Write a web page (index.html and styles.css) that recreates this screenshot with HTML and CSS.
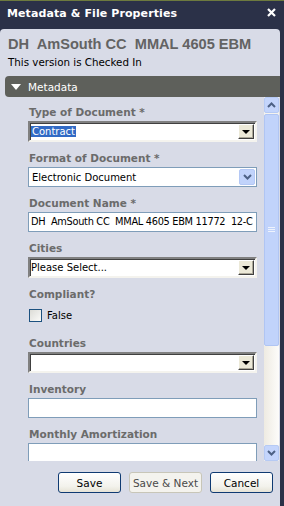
FILE: index.html
```html
<html>
  <head>
    <title>Metadata &amp; File Properties</title>
    <link rel="stylesheet" href="styles.css">
  </head>
  <body>
    <div id="dialog">
      <div class="titlebar">
        <span class="title">Metadata &amp; File Properties</span>
        <svg class="close" width="9" height="9" viewBox="0 0 9 9">
          <path d="M1 1 L8 8 M8 1 L1 8" stroke="white" stroke-width="2.2" />
        </svg>
      </div>

      <div class="panel">
        <div class="doc-title">DH  AmSouth CC  MMAL 4605 EBM</div>
        <div class="status">This version is Checked In</div>

        <div class="section-bar">
          <span class="tri"></span>
          <span>Metadata</span>
        </div>

        <div class="scroll-area">
          <div class="form">
            <div class="field">
              <label>Type of Document *</label>
              <div class="select classic">
                <span class="value"><span class="picked">Contract</span></span>
                <span class="drop-btn"><span class="tri-dark"></span></span>
              </div>
            </div>

            <div class="field">
              <label>Format of Document *</label>
              <div class="select xp">
                <span class="value">Electronic Document</span>
                <span class="drop-btn">
                  <svg width="9" height="6" viewBox="0 0 9 6"><path d="M1 1 L4.5 4.5 L8 1" fill="none" stroke="#4d6185" stroke-width="2" /></svg>
                </span>
              </div>
            </div>

            <div class="field">
              <label>Document Name *</label>
              <div class="text-input name">DH  AmSouth CC  MMAL 4605 EBM 11772  12-C</div>
            </div>

            <div class="field">
              <label>Cities</label>
              <div class="select classic">
                <span class="value">Please Select...</span>
                <span class="drop-btn"><span class="tri-dark"></span></span>
              </div>
            </div>

            <div class="field">
              <label>Compliant?</label>
              <div class="check-row">
                <span class="checkbox"></span>
                <span>False</span>
              </div>
            </div>

            <div class="field">
              <label>Countries</label>
              <div class="select classic">
                <span class="value"></span>
                <span class="drop-btn"><span class="tri-dark"></span></span>
              </div>
            </div>

            <div class="field">
              <label>Inventory</label>
              <div class="text-input"></div>
            </div>

            <div class="field">
              <label>Monthly Amortization</label>
              <div class="text-input"></div>
            </div>
          </div>

          <div class="scrollbar">
            <div class="sb-btn">
              <svg width="9" height="6" viewBox="0 0 9 6"><path d="M1 5 L4.5 1.5 L8 5" fill="none" stroke="#4d6185" stroke-width="2" /></svg>
            </div>
            <div class="sb-thumb">
              <svg width="7" height="6" viewBox="0 0 7 6"><path d="M0 0.5 H7 M0 2.5 H7 M0 4.5 H7" stroke="#eef3fd" stroke-width="1" /></svg>
            </div>
            <div class="sb-track"></div>
            <div class="sb-btn">
              <svg width="9" height="6" viewBox="0 0 9 6"><path d="M1 1 L4.5 4.5 L8 1" fill="none" stroke="#4d6185" stroke-width="2" /></svg>
            </div>
          </div>
        </div>

        <div class="actions">
          <button class="btn save">Save</button>
          <button class="btn disabled">Save &amp; Next</button>
          <button class="btn cancel">Cancel</button>
        </div>
      </div>
    </div>
  </body>
</html>
```

FILE: styles.css
```css
* {
  box-sizing: border-box;
  margin: 0;
  padding: 0;
}
body {
  background: #2b3148;
  font-family: "DejaVu Sans", Verdana, sans-serif;
  font-size: 10px;
  overflow: hidden;
}
#dialog {
  display: flex;
  flex-direction: column;
  height: 506px;
  width: 284px;
  border-top: 1px solid #6d7a3f;
}
.titlebar {
  display: flex;
  justify-content: space-between;
  align-items: center;
  height: 28px;
  padding: 0 8px 4px 7px;
}
.title {
  color: white;
  font-weight: bold;
  font-size: 11px;
  letter-spacing: 0.1px;
}
.close {
  margin-top: -2px;
}
.panel {
  flex-grow: 1;
  display: flex;
  flex-direction: column;
  background: #d8dbe7;
  margin-right: 4px;
  border-radius: 4px 4px 0 0;
}
.doc-title {
  white-space: pre;
  font-family: "Liberation Sans", Arial, sans-serif;
  font-weight: bold;
  font-size: 14.6px;
  color: #636363;
  padding: 7px 0 0 8px;
  height: 24px;
}
.status {
  color: black;
  font-size: 10.3px;
  padding: 3px 0 0 8px;
  height: 23px;
}
.section-bar {
  display: flex;
  align-items: center;
  gap: 7px;
  height: 21px;
  margin-left: 5px;
  background: #5e605b;
  border-radius: 4px 0 0 4px;
  color: white;
  font-size: 10.5px;
  padding-left: 6px;
}
.tri {
  width: 0;
  height: 0;
  border-left: 5px solid transparent;
  border-right: 5px solid transparent;
  border-top: 6px solid white;
  margin-top: 1px;
}
.scroll-area {
  display: flex;
  height: 364px;
}
.form {
  flex-grow: 1;
  overflow: hidden;
  padding: 9px 0 0 28px;
}
.field {
  width: 229px;
  margin-bottom: 10px;
}
.field label {
  display: block;
  font-weight: bold;
  font-size: 10.5px;
  color: #6b6b6b;
  padding-left: 1px;
  height: 15px;
}
.select {
  display: flex;
  align-items: center;
  height: 21px;
  background: white;
}
.select .value {
  flex-grow: 1;
  padding-left: 2px;
  color: black;
  white-space: nowrap;
}
.classic {
  border-top: 2px solid #808080;
  border-left: 2px solid #808080;
  border-right: 2px solid #f4f3ee;
  border-bottom: 2px solid #f4f3ee;
  box-shadow: inset 1px 1px 0 #404040;
}
.classic .value {
  padding-left: 1px;
}
.picked {
  background: #316ac5;
  color: white;
  padding: 0 1px;
}
.classic .drop-btn {
  display: flex;
  align-items: center;
  justify-content: center;
  width: 16px;
  height: 15px;
  margin-right: 1px;
  background: #ece9d8;
  border-top: 1px solid #fff;
  border-left: 1px solid #fff;
  border-right: 1px solid #404040;
  border-bottom: 1px solid #404040;
  box-shadow: inset -1px -1px 0 #aca899;
}
.tri-dark {
  width: 0;
  height: 0;
  border-left: 4px solid transparent;
  border-right: 4px solid transparent;
  border-top: 4px solid black;
}
.xp {
  border: 1px solid #7f9db9;
  height: 20px;
}
.xp .value {
  padding-left: 3px;
}
.xp .drop-btn {
  display: flex;
  align-items: center;
  justify-content: center;
  width: 16px;
  height: 16px;
  margin-right: 1px;
  background: #c1d3fb;
  border: 1px solid #b4c8f5;
  border-radius: 2px;
}
.text-input {
  height: 20px;
  border: 1px solid #7f9db9;
  background: white;
  white-space: pre;
  overflow: hidden;
  padding: 3px 0 0 2px;
  color: black;
}
.text-input.name {
  letter-spacing: -0.3px;
  font-size: 9.8px;
}
.check-row {
  display: flex;
  align-items: center;
  gap: 5px;
  height: 24px;
  padding-left: 1px;
  margin-bottom: 4px;
  color: black;
}
.checkbox {
  width: 13px;
  height: 13px;
  border: 1px solid #1c5180;
  background: linear-gradient(135deg, #dcdcd7, #fbfbf9);
}
.scrollbar {
  width: 15px;
  margin-right: 1px;
  display: flex;
  flex-direction: column;
  background: #f5f3ee;
}
.sb-btn {
  height: 16px;
  display: flex;
  align-items: center;
  justify-content: center;
  background: #c4d5fc;
  border: 1px solid #b6caf4;
  border-radius: 2px;
}
.sb-thumb {
  height: 232px;
  display: flex;
  align-items: center;
  justify-content: center;
  background: #c1d3fb;
  border: 1px solid #b0c5f3;
  border-radius: 2px;
  margin-top: 1px;
}
.sb-track {
  flex-grow: 1;
  background: linear-gradient(90deg, #eeebe2, #fdfcfa);
}
.actions {
  display: flex;
  justify-content: flex-end;
  gap: 8px;
  padding: 11px 7px 0 0;
}
.btn {
  font-family: "DejaVu Sans", Verdana, sans-serif;
  font-size: 10.5px;
  height: 21px;
  width: 63px;
  border: 1px solid #0f3a72;
  border-radius: 3px;
  background: linear-gradient(#ffffff, #f3f2ec 70%, #e6e3d6);
  color: black;
}
.btn.disabled {
  width: 73px;
  border-color: #c8c6b8;
  background: #f4f3ee;
  color: #4a4a4a;
}
```
